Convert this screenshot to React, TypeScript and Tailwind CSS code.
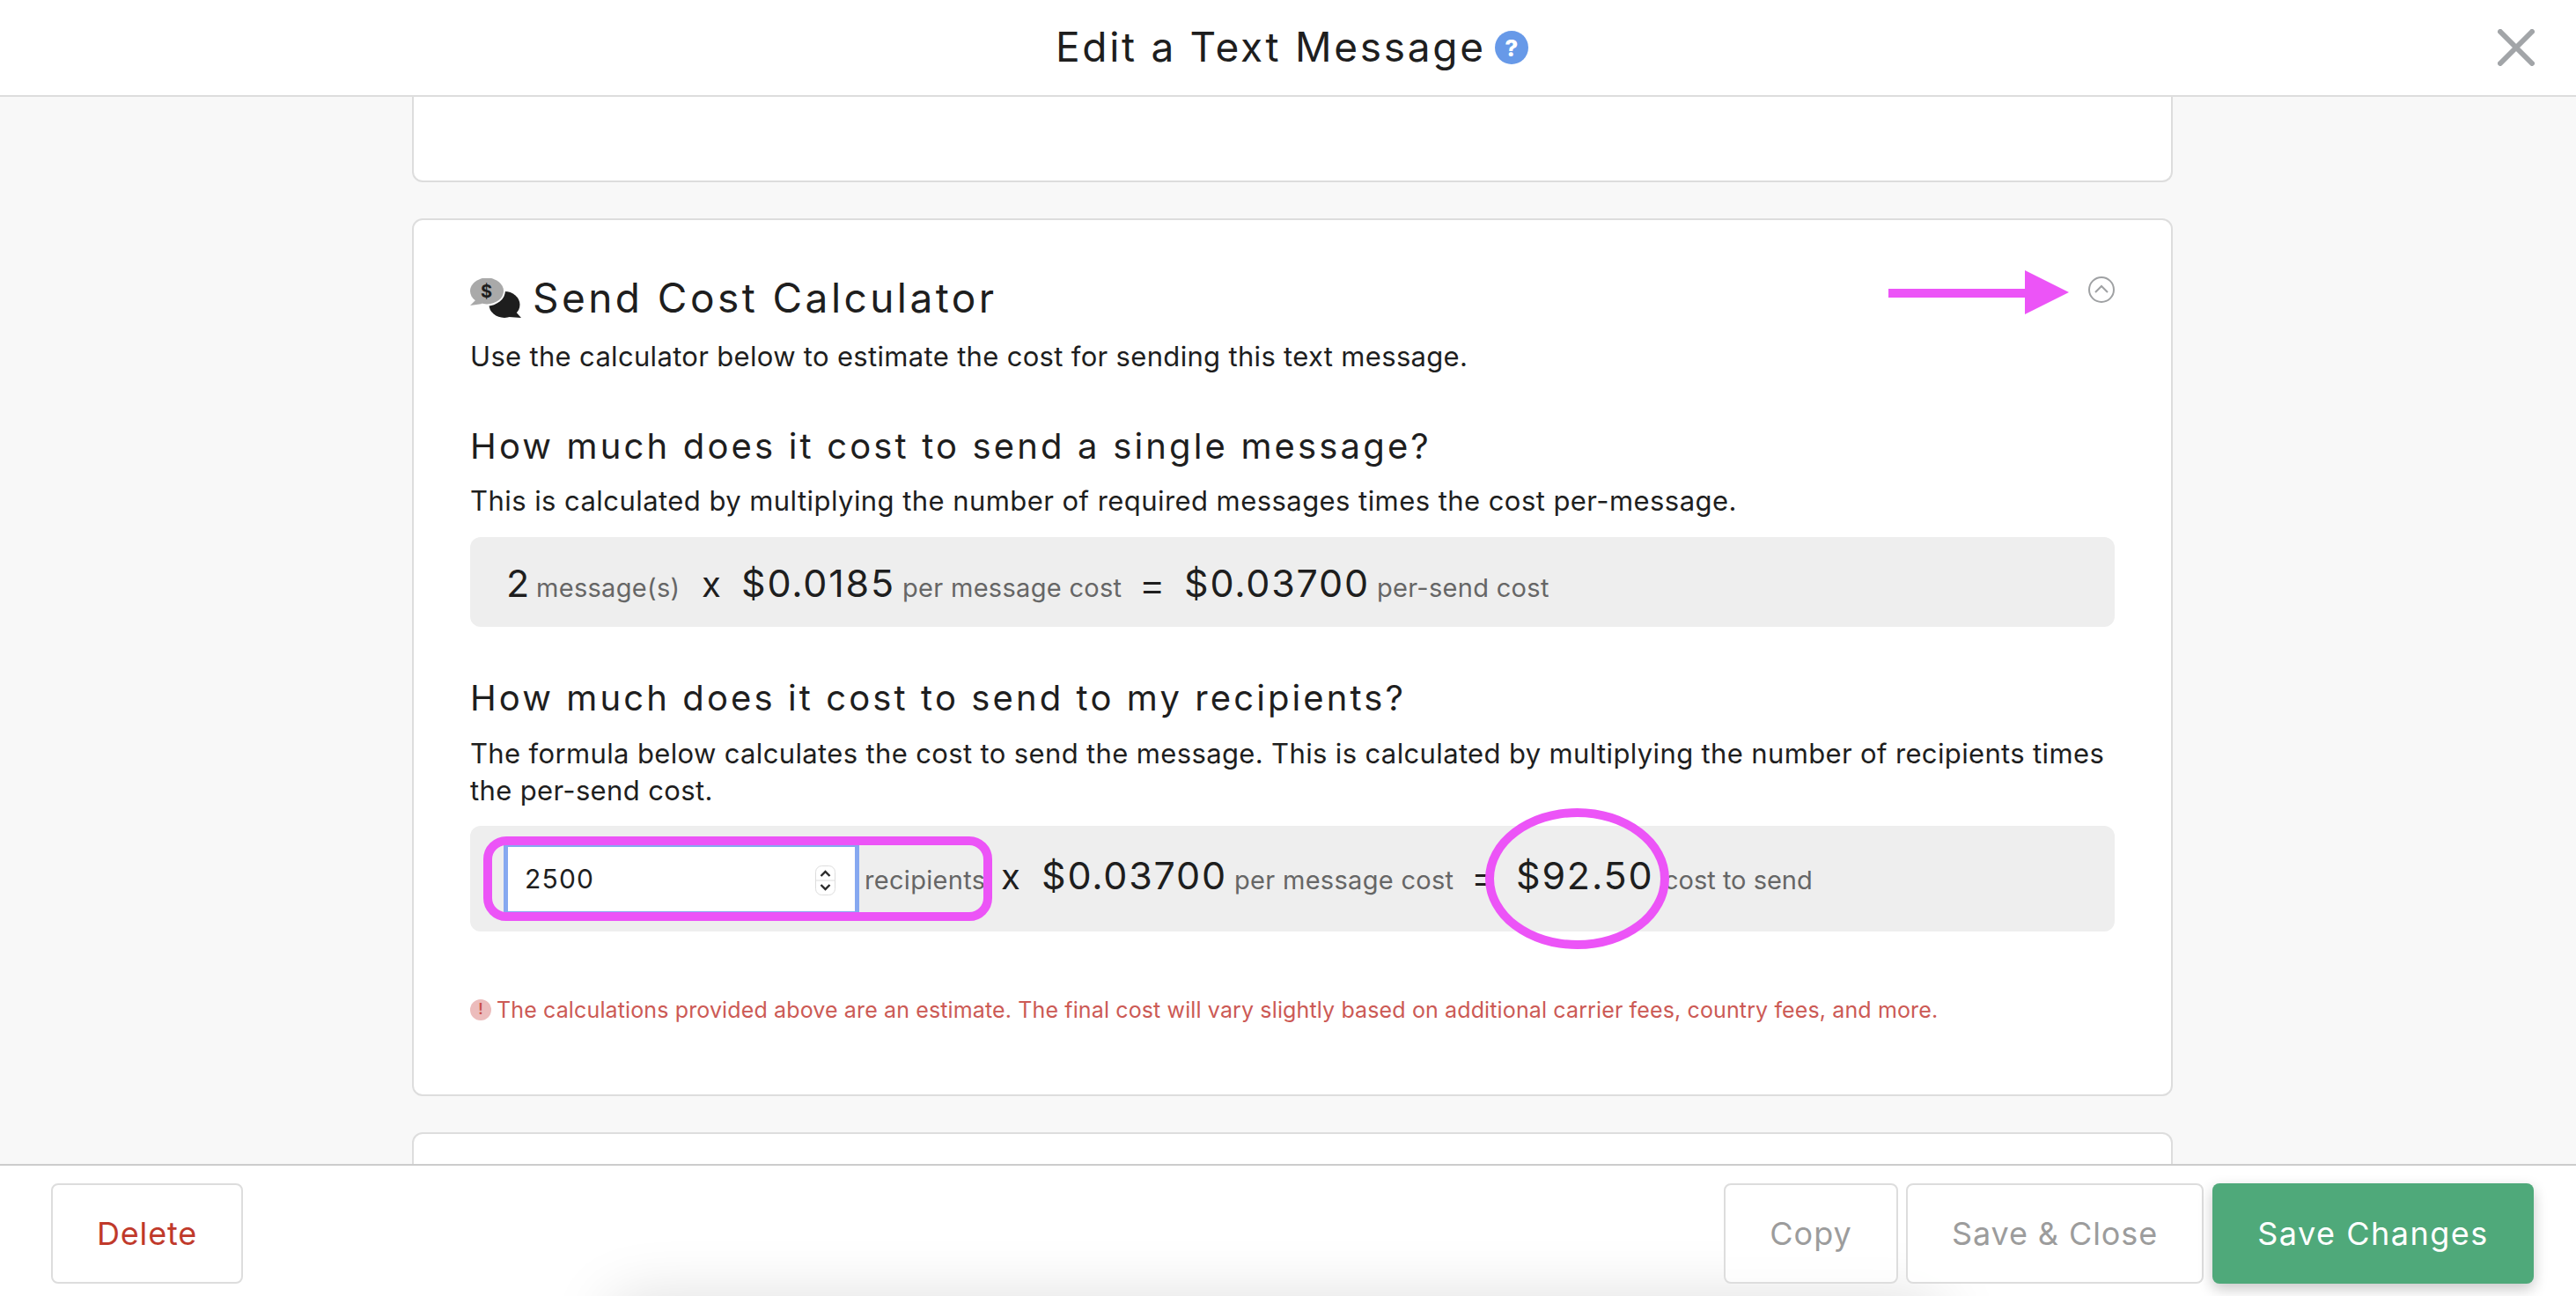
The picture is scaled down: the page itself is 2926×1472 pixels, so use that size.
import React from "react";

const font = { fontFamily: "Inter, 'Liberation Sans', sans-serif" };

function Chat() {
  return (
    <svg width="58" height="45" viewBox="0 0 58 45" className="shrink-0">
      <ellipse cx="39" cy="30" rx="17.5" ry="15" fill="#1e1e1e" />
      <polygon points="50,36 58,45 44,44" fill="#1e1e1e" />
      <ellipse cx="19" cy="14" rx="21" ry="17.5" fill="#fff" />
      <ellipse cx="19" cy="14.5" rx="19" ry="15" fill="#a9a9a9" />
      <polygon points="7,24 0,31 14,29" fill="#a9a9a9" />
      <text x="18.5" y="21.5" textAnchor="middle" fontSize="20" fontWeight="700" fill="#1e1e1e" fontFamily="Inter">$</text>
    </svg>
  );
}

type P = { children: React.ReactNode; className?: string };

function Big({ children, className = "" }: P) {
  return <span className={"shrink-0 text-[43px] leading-none text-[#1e1e1e] tracking-[1.8px] whitespace-nowrap " + className}>{children}</span>;
}
function Small({ children, className = "" }: P) {
  return <span className={"shrink-0 text-[29px] leading-none text-[#666666] tracking-[0.3px] whitespace-nowrap " + className}>{children}</span>;
}
function Times({ className = "" }: { className?: string }) {
  return <span className={"shrink-0 text-[40px] leading-none text-[#1e1e1e] whitespace-nowrap " + className}>x</span>;
}
function Eq({ className = "" }: { className?: string }) {
  return <span className={"shrink-0 text-[48px] font-light leading-none text-[#1e1e1e] whitespace-nowrap translate-y-[3px] " + className}>=</span>;
}

export default function App() {
  return (
    <div style={font} className="relative w-[2926px] h-[1472px] overflow-hidden flex flex-col bg-white text-[#1e1e1e]">
      <header className="h-[110px] shrink-0 border-b-2 border-[#dddddd] bg-white flex items-center relative">
        <div className="ml-[1199px] flex items-center">
          <h1 className="text-[46px] leading-[60px] font-normal tracking-[2.7px] whitespace-nowrap -mt-[2px]">Edit a Text Message</h1>
          <span className="ml-[10px] w-[38px] h-[38px] rounded-full bg-[#6799e8] text-white text-[26px] font-extrabold flex items-center justify-center">?</span>
        </div>
        <svg className="ml-auto mr-[47px]" width="42" height="42" viewBox="0 0 42 42">
          <path d="M3 3 L39 39 M39 3 L3 39" stroke="#a2a5a8" strokeWidth="6" strokeLinecap="round" />
        </svg>
      </header>

      <main className="flex-1 min-h-0 overflow-hidden bg-[#f8f8f8]">
        <div className="ml-[468px] w-[2000px] flex flex-col gap-[41px]">
          <section className="h-[97px] bg-white border-2 border-t-0 border-[#dddddd] rounded-b-[12px]" />
          <section className="relative h-[997px] shrink-0 bg-white border-2 border-[#dddddd] rounded-[12px] px-[64px] pt-[58px]">
            <div className="flex items-center h-[60px]">
              <Chat />
              <h2 className="ml-[13px] text-[46px] leading-[60px] font-normal tracking-[3.45px] whitespace-nowrap">Send Cost Calculator</h2>
              <div className="relative ml-auto w-[30px] h-[30px] -mt-[18px]">
                <svg width="30" height="30" viewBox="0 0 30 30">
                  <circle cx="15" cy="15" r="14" fill="none" stroke="#9fa1a3" strokeWidth="2" />
                  <path d="M8 18 L15 11 L22 18" fill="none" stroke="#9fa1a3" strokeWidth="2" />
                </svg>
                <svg className="absolute left-[-227px] top-[-7px]" width="205" height="50" viewBox="0 0 205 50">
                  <rect x="0" y="21" width="156" height="10" fill="#ec54f7" />
                  <polygon points="155,0 205,25 155,50" fill="#ec54f7" />
                </svg>
              </div>
            </div>
            <p className="mt-[16px] text-[31px] leading-[42px] tracking-[0.32px] whitespace-nowrap">Use the calculator below to estimate the cost for sending this text message.</p>

            <h3 className="mt-[53px] text-[40px] leading-[56px] font-normal tracking-[3.15px] whitespace-nowrap">How much does it cost to send a single message?</h3>
            <p className="mt-[13px] text-[31px] leading-[42px] tracking-[0.44px] whitespace-nowrap">This is calculated by multiplying the number of required messages times the cost per-message.</p>
            <div className="mt-[20px] h-[102px] bg-[#eeeeee] rounded-[12px] flex items-baseline pl-[41px] pt-[27px]">
              <Big className="w-[34px]">2</Big>
              <Small className="w-[188px]">message(s)</Small>
              <Times className="w-[45px]" />
              <Big className="w-[183px]">$0.0185</Big>
              <Small className="w-[268px]">per message cost</Small>
              <Eq className="w-[52px]" />
              <Big className="w-[219px]">$0.03700</Big>
              <Small>per-send cost</Small>
            </div>

            <h3 className="mt-[53px] text-[40px] leading-[56px] font-normal tracking-[3.1px] whitespace-nowrap">How much does it cost to send to my recipients?</h3>
            <p className="mt-[14px] text-[31px] leading-[42px] tracking-[0.36px] w-[1880px]">The formula below calculates the cost to send the message. This is calculated by multiplying the number of recipients times the per-send cost.</p>
            <div className="mt-[19px] h-[120px] bg-[#eeeeee] rounded-[12px] flex items-center pl-[38px] relative">
              <div className="relative w-[404px] h-[77px] bg-white border-x-[5px] border-y-2 border-[#86a8f0] flex items-center shrink-0">
                <input readOnly defaultValue="2500" className="w-[300px] ml-[19px] text-[30px] tracking-[1.2px] leading-none bg-transparent text-[#1e1e1e] outline-none" />
                <svg className="absolute right-[22px] top-[21px]" width="23" height="34" viewBox="0 0 23 34">
                  <rect x="0.5" y="0.5" width="22" height="33" rx="7" fill="#fff" stroke="#dddddd" />
                  <line x1="0" y1="17" x2="23" y2="17" stroke="#dddddd" />
                  <path d="M6.5 12 L11.5 7 L16.5 12 M6.5 22 L11.5 27 L16.5 22" fill="none" stroke="#2a2a2a" strokeWidth="2.4" />
                </svg>
              </div>
              <div className="flex items-baseline ml-[6px] -mt-[11px]">
                <Small className="w-[155px]">recipients</Small>
                <Times className="w-[46px]" />
                <Big className="w-[219px]">$0.03700</Big>
                <Small className="w-[268px]">per message cost</Small>
                <Eq className="w-[52px]" />
                <Big className="w-[168px]">$92.50</Big>
                <Small className="tracking-[0px]">cost to send</Small>
              </div>

              <div className="absolute left-[15px] top-[12px] w-[578px] h-[96px] border-[10px] border-[#ec54f7] rounded-[26px] pointer-events-none" />
              <div className="absolute left-[1153px] top-[-20px] w-[209px] h-[160px] border-[10px] border-[#ec54f7] rounded-[50%] pointer-events-none" />
            </div>

            <div className="mt-[71px] flex items-center h-[36px]">
              <span className="w-[24px] h-[24px] rounded-full bg-[#ecbcbc] text-[#c9504a] text-[17px] font-semibold flex items-center justify-center shrink-0">!</span>
              <p className="ml-[6px] text-[25px] leading-[36px] tracking-[0.13px] text-[#cc5a55] whitespace-nowrap">The calculations provided above are an estimate. The final cost will vary slightly based on additional carrier fees, country fees, and more.</p>
            </div>
          </section>
          <section className="h-[400px] shrink-0 bg-white border-2 border-[#dddddd] rounded-[12px]" />
        </div>
      </main>

      <footer className="h-[150px] shrink-0 border-t-2 border-[#cccccc] bg-white flex items-start pt-[20px] pl-[58px] pr-[48px] relative overflow-hidden">
        <div className="absolute left-[700px] right-[726px] top-[162px] h-[40px] shadow-[0_0_70px_10px_rgba(0,0,0,0.15)] rounded-[40px]" />
        <button className="relative w-[218px] h-[114px] bg-white border-2 border-[#dddddd] rounded-[8px] text-[36px] tracking-[0.8px] text-[#c0392b]">Delete</button>
        <button className="relative ml-auto w-[198px] h-[114px] bg-white/70 border-2 border-[#dddddd] rounded-[8px] text-[36px] tracking-[1px] text-[#9c9c9c]">Copy</button>
        <button className="relative ml-[9px] w-[338px] h-[114px] bg-white/90 border-2 border-[#dddddd] rounded-[8px] text-[36px] tracking-[0.9px] text-[#9c9c9c]">Save &amp; Close</button>
        <button className="relative ml-[10px] w-[365px] h-[114px] bg-[#4fa97a] rounded-[8px] text-[36px] tracking-[1.5px] text-white shadow-[0_6px_16px_rgba(0,0,0,0.22)]">Save Changes</button>
      </footer>
    </div>
  );
}
